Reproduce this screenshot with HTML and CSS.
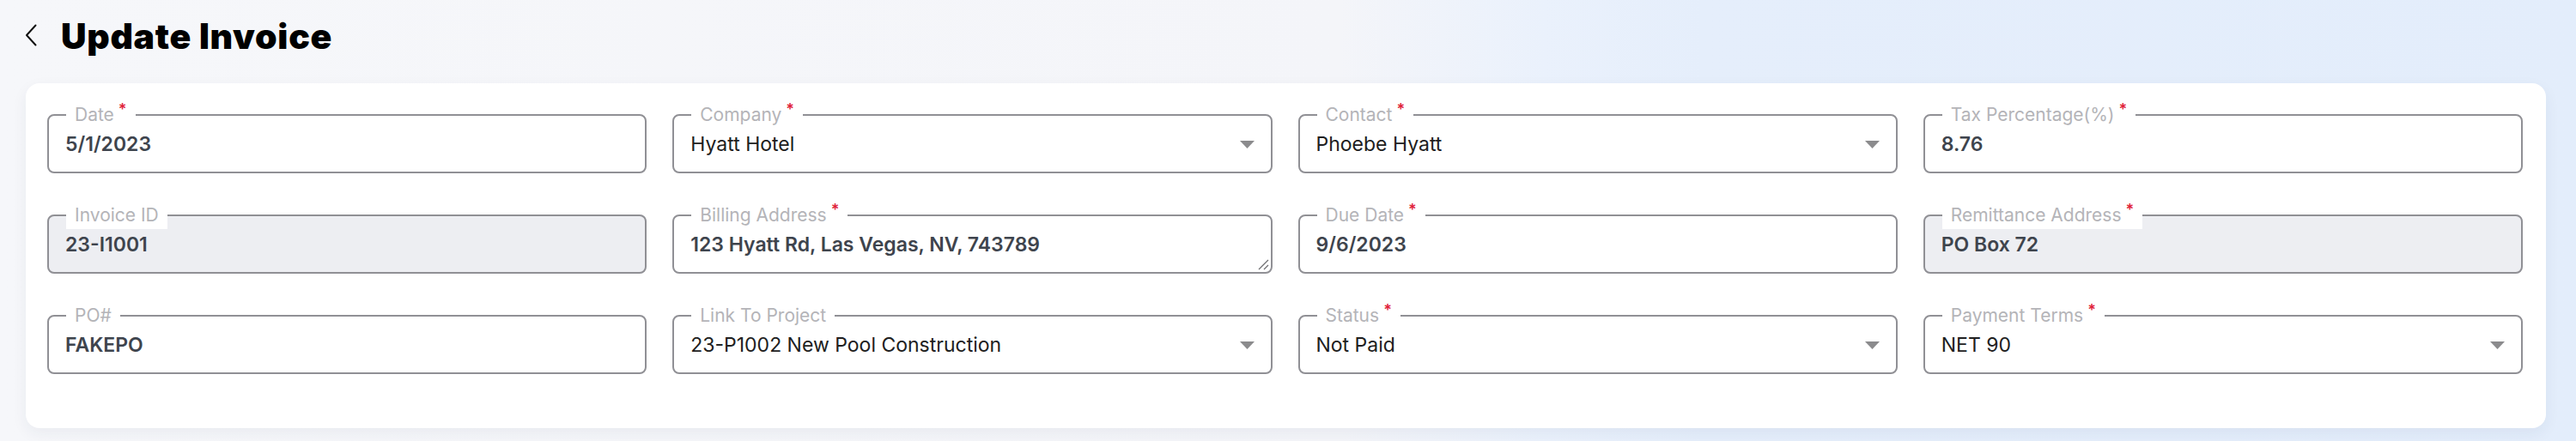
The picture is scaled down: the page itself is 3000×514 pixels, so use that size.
FILE: index.html
```html
<!DOCTYPE html>
<html lang="en">
<head>
<meta charset="utf-8">
<title>Update Invoice</title>
<link rel="stylesheet" href="styles.css">
</head>
<body>
<div class="page">
  <header class="header">
    <button class="back" aria-label="Back">
      <svg width="14" height="26" viewBox="0 0 14 26"><path d="M12.5 1.5 L2 13 L12.5 24.5" fill="none" stroke="#111" stroke-width="2" stroke-linecap="round" stroke-linejoin="round"/></svg>
    </button>
    <h1 class="title">Update Invoice</h1>
  </header>

  <section class="card">
    <div class="grid">
      <fieldset class="field">
        <legend>Date<span class="req">*</span></legend>
        <div class="value input">5/1/2023</div>
      </fieldset>
      <fieldset class="field">
        <legend>Company<span class="req">*</span></legend>
        <div class="value select"><span>Hyatt Hotel</span><svg class="caret" width="17" height="9" viewBox="0 0 17 9"><path d="M0 0 H17 L8.5 9 Z" fill="#8b8b8d"/></svg></div>
      </fieldset>
      <fieldset class="field">
        <legend>Contact<span class="req">*</span></legend>
        <div class="value select"><span>Phoebe Hyatt</span><svg class="caret" width="17" height="9" viewBox="0 0 17 9"><path d="M0 0 H17 L8.5 9 Z" fill="#8b8b8d"/></svg></div>
      </fieldset>
      <fieldset class="field">
        <legend>Tax Percentage(%)<span class="req">*</span></legend>
        <div class="value input">8.76</div>
      </fieldset>

      <fieldset class="field disabled">
        <legend>Invoice ID</legend>
        <div class="value input">23-I1001</div>
      </fieldset>
      <fieldset class="field textarea">
        <legend>Billing Address<span class="req">*</span></legend>
        <div class="value input">123 Hyatt Rd, Las Vegas, NV, 743789</div>
        <svg class="resize" width="14" height="14" viewBox="0 0 14 14"><path d="M13 2 L2 13 M13 8 L8 13" stroke="#6f6f72" stroke-width="1.3" fill="none"/></svg>
      </fieldset>
      <fieldset class="field">
        <legend>Due Date<span class="req">*</span></legend>
        <div class="value input">9/6/2023</div>
      </fieldset>
      <fieldset class="field disabled">
        <legend>Remittance Address<span class="req">*</span></legend>
        <div class="value input">PO Box 72</div>
      </fieldset>

      <fieldset class="field">
        <legend>PO#</legend>
        <div class="value input">FAKEPO</div>
      </fieldset>
      <fieldset class="field">
        <legend>Link To Project</legend>
        <div class="value select"><span>23-P1002 New Pool Construction</span><svg class="caret" width="17" height="9" viewBox="0 0 17 9"><path d="M0 0 H17 L8.5 9 Z" fill="#8b8b8d"/></svg></div>
      </fieldset>
      <fieldset class="field">
        <legend>Status<span class="req">*</span></legend>
        <div class="value select"><span>Not Paid</span><svg class="caret" width="17" height="9" viewBox="0 0 17 9"><path d="M0 0 H17 L8.5 9 Z" fill="#8b8b8d"/></svg></div>
      </fieldset>
      <fieldset class="field">
        <legend>Payment Terms<span class="req">*</span></legend>
        <div class="value select"><span>NET 90</span><svg class="caret" width="17" height="9" viewBox="0 0 17 9"><path d="M0 0 H17 L8.5 9 Z" fill="#8b8b8d"/></svg></div>
      </fieldset>
    </div>
  </section>
</div>
</body>
</html>
```

FILE: styles.css
```css
* { box-sizing: border-box; }

html, body {
  margin: 0;
  height: 100%;
}

body {
  font-family: Inter, "Noto Sans", "Liberation Sans", sans-serif;
  background: linear-gradient(90deg, #f6f7fa 0%, #f4f5f9 52%, #eaf1fc 60%, #e5eefb 66%, #e3edfb 100%);
  overflow: hidden;
}

.page {
  padding: 18px 35px 0 30px;
}

.header {
  display: flex;
  align-items: center;
  height: 48px;
}

.back {
  display: flex;
  align-items: center;
  padding: 0;
  margin: -3px 0 0 -1px;
  border: 0;
  background: none;
  width: 14px;
  height: 26px;
}

.title {
  margin: 0 0 0 28px;
  font-size: 41px;
  line-height: 48px;
  font-weight: 900;
  color: #000;
  letter-spacing: 0.7px;
}

.card {
  margin-top: 31px;
  background: #fff;
  border-radius: 16px;
  box-shadow: 0 6px 18px rgba(40, 50, 80, 0.06);
  padding: 21px 27px 63px 25px;
}

.grid {
  display: grid;
  grid-template-columns: repeat(4, 1fr);
  column-gap: 30px;
  row-gap: 33px;
}

.field {
  position: relative;
  margin: 0;
  min-width: 0;
  border: 2px solid #909095;
  border-radius: 8px;
  padding: 3px 18px 17px 19px;
  background: #fff;
}

.field legend {
  margin-left: 1px;
  padding: 0 10px;
  font-size: 21px;
  line-height: 32px;
  color: #b4b4b8;
  font-weight: 400;
  white-space: nowrap;
}

.req {
  color: #e0233a;
  font-size: 18px;
  font-weight: 600;
  line-height: 1;
  vertical-align: 7px;
  margin-left: 5px;
}

.field.disabled {
  background: #edeef2;
}

.field.disabled legend {
  background: #fff;
}

.value {
  font-size: 23px;
  line-height: 30px;
  height: 30px;
  white-space: nowrap;
}

.value.input {
  font-weight: 600;
  color: #3e444d;
}

.value.select {
  display: flex;
  align-items: center;
  justify-content: space-between;
  color: #202020;
  font-weight: 400;
}

.caret {
  flex: none;
  margin-right: 1px;
}

.resize {
  position: absolute;
  right: 2px;
  bottom: 2px;
}
```
